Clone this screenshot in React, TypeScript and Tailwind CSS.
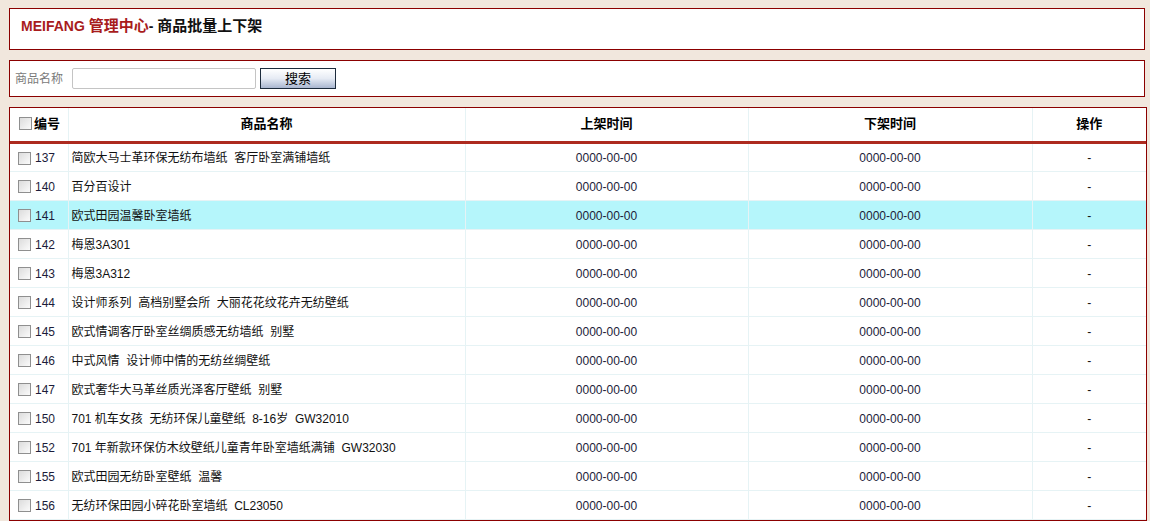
const rows = [
  { id: 137, name: '简欧大马士革环保无纺布墙纸  客厅卧室满铺墙纸' },
  { id: 140, name: '百分百设计' },
  { id: 141, name: '欧式田园温馨卧室墙纸', active: true },
  { id: 142, name: '梅恩3A301' },
  { id: 143, name: '梅恩3A312' },
  { id: 144, name: '设计师系列  高档别墅会所  大丽花花纹花卉无纺壁纸' },
  { id: 145, name: '欧式情调客厅卧室丝绸质感无纺墙纸  别墅' },
  { id: 146, name: '中式风情  设计师中情的无纺丝绸壁纸' },
  { id: 147, name: '欧式奢华大马革丝质光泽客厅壁纸  别墅' },
  { id: 150, name: '701 机车女孩  无纺环保儿童壁纸  8-16岁  GW32010' },
  { id: 152, name: '701 年新款环保仿木纹壁纸儿童青年卧室墙纸满铺  GW32030' },
  { id: 155, name: '欧式田园无纺卧室壁纸  温馨' },
  { id: 156, name: '无纺环保田园小碎花卧室墙纸  CL23050' },
];

function Check() {
  return (
    <span className="inline-block h-[13px] w-[13px] shrink-0 border border-[#8f8f8f] bg-gradient-to-br from-[#dcdcdc] to-[#fbfbfb] align-middle" />
  );
}

export default function App() {
  return (
    <div className="min-h-[521px] bg-[#f1e7dd] pl-[9px] pr-[3px] pt-[8px] font-['Liberation_Sans','Noto_Sans_CJK_SC',sans-serif] text-[12px] text-[#111]">
      <div className="mr-[2px] flex h-[42px] items-center border border-[#8b0000] bg-white pb-[5px] pl-[11px] text-[14px] font-bold">
        <span className="text-[#a81c1c]">
          MEIFANG <span className="text-[15px]">管理中心</span>
        </span>
        <span>
          - <span className="text-[15px]">商品批量上下架</span>
        </span>
      </div>

      <div className="mr-[2px] mt-[10px] flex h-[37px] items-center border border-[#8b0000] bg-white pl-[5px]">
        <span className="text-[#7a7a7a]">商品名称</span>
        <input className="ml-[9px] h-[21px] w-[184px] rounded-[2px] border border-[#c4c4c4] bg-white outline-none" />
        <button className="ml-[4px] h-[21px] w-[76px] border border-[#1c2b3c] bg-gradient-to-b from-[#ffffff] via-[#e6ebf4] to-[#a9b6d0] text-[13px] leading-none text-black">
          搜索
        </button>
      </div>

      <div className="mt-[10px] border border-[#8b0000] bg-white">
        <table className="w-full table-fixed border-collapse">
          <colgroup>
            <col className="w-[58px]" />
            <col className="w-[397px]" />
            <col className="w-[283px]" />
            <col className="w-[284px]" />
            <col />
          </colgroup>
          <thead>
            <tr className="h-[34px] border-b-[3px] border-[#ad2a1f] text-[13px] font-bold text-black">
              <th className="border-r border-[#e6f3f5] pb-[2px] pl-[9px] text-left">
                <span className="flex items-center gap-[2px]">
                  <Check />
                  编号
                </span>
              </th>
              <th className="border-r border-[#e6f3f5] pb-[2px]">商品名称</th>
              <th className="border-r border-[#e6f3f5] pb-[2px]">上架时间</th>
              <th className="border-r border-[#e6f3f5] pb-[2px]">下架时间</th>
              <th className="pb-[2px]">操作</th>
            </tr>
          </thead>
          <tbody>
            {rows.map((r) => (
              <tr
                key={r.id}
                className={`h-[29px] border-b border-[#e6f3f5] ${r.active ? 'bg-[#b5f6fb]' : ''}`}
              >
                <td className="border-r border-[#e6f3f5] pl-[8px] pt-[2px]">
                  <span className="flex items-center gap-[4px] text-[#1c1c3a]">
                    <Check />
                    {r.id}
                  </span>
                </td>
                <td className="border-r border-[#e6f3f5] pl-[3px] pt-[2px] whitespace-pre">{r.name}</td>
                <td className="border-r border-[#e6f3f5] pt-[2px] text-center text-[#1c1c3a]">0000-00-00</td>
                <td className="border-r border-[#e6f3f5] pt-[2px] text-center text-[#1c1c3a]">0000-00-00</td>
                <td className="pt-[2px] text-center">-</td>
              </tr>
            ))}
          </tbody>
        </table>
      </div>
    </div>
  );
}
